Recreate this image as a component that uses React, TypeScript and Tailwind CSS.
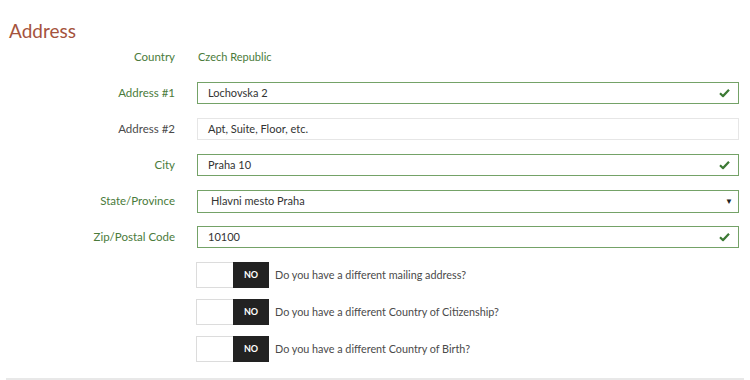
import React from 'react';

const font = { fontFamily: 'Lato, "Open Sans", sans-serif' };

const Check = () => (
  <svg width="11" height="9" viewBox="0 0 11 9" className="absolute right-[8px] top-1/2 -translate-y-1/2">
    <path d="M1 4.8 L4 7.6 L10 1.2" fill="none" stroke="#3d7a35" strokeWidth="2.2" />
  </svg>
);

const Field = ({ label, value, valid, muted }: { label: string; value: string; valid?: boolean; muted?: boolean }) => (
  <div className="flex items-center h-[22px]">
    <div className={`w-[175px] text-right text-[11.5px] ${muted ? 'text-[#4a4a4a]' : 'text-[#4a7b3b]'}`}>{label}</div>
    <div
      className={`relative ml-[22px] flex-1 h-[22px] flex items-center pl-[10px] text-[11px] text-[#333] border ${
        valid ? 'border-[#74a267]' : 'border-[#e6e6e6]'
      }`}
    >
      {value}
      {valid && <Check />}
    </div>
  </div>
);

const Toggle = ({ text }: { text: string }) => (
  <div className="flex items-center h-[26px] ml-[196px]">
    <div className="w-[37px] h-[26px] border border-[#dcdcdc] border-r-0 bg-white" />
    <div className="w-[36px] h-[26px] bg-[#222] text-white text-[9px] font-bold flex items-center justify-center">NO</div>
    <div className="ml-[6px] text-[10.8px] text-[#4a4a4a]">{text}</div>
  </div>
);

export default function App() {
  return (
    <div className="w-[750px] h-[380px] bg-white relative" style={font}>
      <div className="pt-[19px]">
        <h2 className="pl-[9px] text-[19px] leading-[24px] text-[#a5533d]">Address</h2>
        <div className="mt-[3px] pr-[11px] flex flex-col gap-[14px]">
          <div className="flex items-center h-[22px]">
            <div className="w-[175px] text-right text-[11.5px] text-[#4a7b3b]">Country</div>
            <div className="ml-[23px] text-[11px] text-[#4a7b3b]">Czech Republic</div>
          </div>
          <Field label="Address #1" value="Lochovska 2" valid />
          <Field label="Address #2" value="Apt, Suite, Floor, etc." muted />
          <Field label="City" value="Praha 10" valid />
          <div className="flex items-center h-[22px]">
            <div className="w-[175px] text-right text-[11.5px] text-[#4a7b3b]">State/Province</div>
            <div className="relative ml-[22px] flex-1 h-[23px] flex items-center pl-[13px] text-[11px] text-[#333] border border-[#74a267]">
              Hlavni mesto Praha
              <span className="absolute right-[5px] top-1/2 -translate-y-1/2 text-[8px] text-[#222]">▼</span>
            </div>
          </div>
          <Field label="Zip/Postal Code" value="10100" valid />
        </div>
        <div className="mt-[14px] flex flex-col gap-[11px]">
          <Toggle text="Do you have a different mailing address?" />
          <Toggle text="Do you have a different Country of Citizenship?" />
          <Toggle text="Do you have a different Country of Birth?" />
        </div>
      </div>
      <div className="absolute left-[6px] right-[6px] bottom-0 h-[2px] bg-[#e8e8e8]" />
    </div>
  );
}
